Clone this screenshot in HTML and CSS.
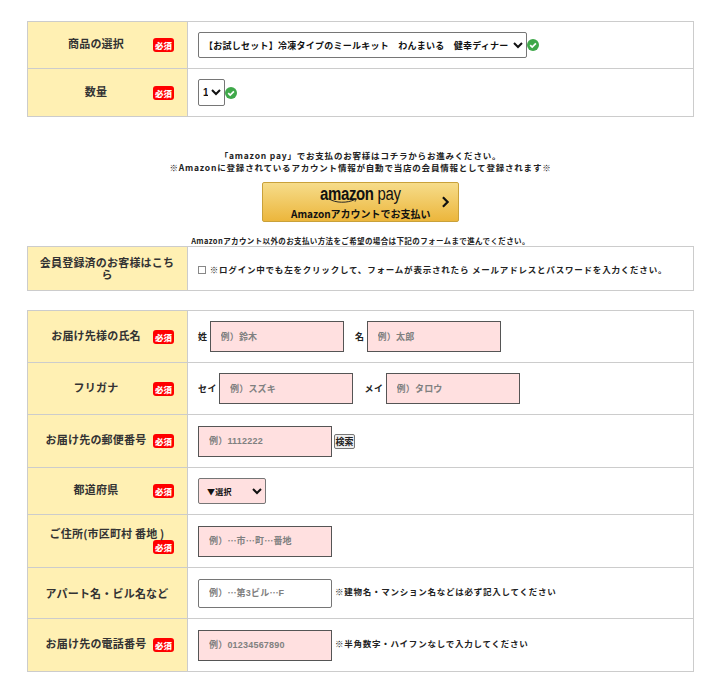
FILE: index.html
```html
<!DOCTYPE html>
<html lang="ja">
<head>
<meta charset="utf-8">
<title>注文フォーム</title>
<link rel="stylesheet" href="styles.css">
</head>
<body>
<main class="page">
  <table class="form-table">
    <tr class="h47">
      <th><span>商品の選択</span><b class="req">必須</b></th>
      <td class="inline">
        <select class="select product"><option>【お試しセット】冷凍タイプのミールキット　わんまいる　健幸ディナー</option></select><svg class="ok" viewBox="0 0 12 12"><circle cx="6" cy="6" r="6" fill="#3fa84a"/><path d="M3.2 6.2 5.2 8.1 8.9 4.3" fill="none" stroke="#fff" stroke-width="1.7"/></svg>
      </td>
    </tr>
    <tr class="h48">
      <th><span>数量</span><b class="req">必須</b></th>
      <td class="inline">
        <select class="select qty"><option>1</option></select><svg class="ok" viewBox="0 0 12 12"><circle cx="6" cy="6" r="6" fill="#3fa84a"/><path d="M3.2 6.2 5.2 8.1 8.9 4.3" fill="none" stroke="#fff" stroke-width="1.7"/></svg>
      </td>
    </tr>
  </table>

  <section class="amazon">
    <p class="note">「amazon pay」でお支払のお客様はコチラからお進みください。</p>
    <p class="note">※Amazonに登録されているアカウント情報が自動で当店の会員情報として登録されます※</p>
    <a class="pay-btn" href="#">
      <span class="pay-logo">amazon<span class="pay-word"> pay</span></span>
      <svg class="smile" viewBox="0 0 40 8"><path d="M1 1C10 7 26 7 36 2" fill="none" stroke="#222" stroke-width="1.3"/><path d="M33 1 38 1 36 5" fill="none" stroke="#222" stroke-width="1"/></svg>
      <span class="pay-sub">Amazonアカウントでお支払い</span>
      <svg class="chev" viewBox="0 0 10 14"><path d="M2 1.5 7.5 7 2 12.5" fill="none" stroke="#111" stroke-width="2.6"/></svg>
    </a>
    <p class="note small">Amazonアカウント以外のお支払い方法をご希望の場合は下記のフォームまで進んでください。</p>
  </section>

  <table class="form-table member">
    <tr class="h44">
      <th>会員登録済のお客様はこちら</th>
      <td class="login"><input type="checkbox" class="check"> ※ログイン中でも左をクリックして、フォームが表示されたら メールアドレスとパスワードを入力ください。</td>
    </tr>
  </table>

  <table class="form-table last">
    <tr class="h52">
      <th><span>お届け先様の氏名</span><b class="req">必須</b></th>
      <td class="inline"><label class="lbl">姓</label><input class="input pink w134" placeholder="例）鈴木"><label class="lbl gap12">名</label><input class="input pink w134" placeholder="例）太郎"></td>
    </tr>
    <tr class="h52">
      <th><span>フリガナ</span><b class="req">必須</b></th>
      <td class="inline"><label class="lbl">セイ</label><input class="input pink w134" placeholder="例）スズキ"><label class="lbl gap12">メイ</label><input class="input pink w134" placeholder="例）タロウ"></td>
    </tr>
    <tr class="h53">
      <th><span>お届け先の郵便番号</span><b class="req">必須</b></th>
      <td class="inline"><input class="input pink w134" placeholder="例）1112222"><button class="search" type="button">検索</button></td>
    </tr>
    <tr class="h47">
      <th><span>都道府県</span><b class="req">必須</b></th>
      <td class="inline"><select class="select pref"><option>▼選択</option></select></td>
    </tr>
    <tr class="h53">
      <th><span>ご住所(市区町村 番地 )</span><b class="req">必須</b></th>
      <td class="inline"><input class="input pink w134" placeholder="例）⋯市⋯町⋯番地"></td>
    </tr>
    <tr class="h51">
      <th>アパート名・ビル名など</th>
      <td class="inline"><input class="input white w134" placeholder="例）⋯第3ビル⋯F"><span class="hint">※建物名・マンション名などは必ず記入してください</span></td>
    </tr>
    <tr class="h53">
      <th><span>お届け先の電話番号</span><b class="req">必須</b></th>
      <td class="inline"><input class="input pink w134" placeholder="例）01234567890"><span class="hint">※半角数字・ハイフンなしで入力してください</span></td>
    </tr>
  </table>
</main>
</body>
</html>
```

FILE: styles.css
```css
* { box-sizing: border-box; }
html, body { margin: 0; background: #fff; }
body {
  font-family: "Noto Sans CJK JP", "Noto Sans", sans-serif;
  color: #222;
}
.page { padding: 21px 23px 0 27px; }
.form-table {
  width: 667px;
  border-collapse: collapse;
  table-layout: fixed;
  margin-bottom: 20px;
}
.member { margin-bottom: 19px; }
.form-table th, .form-table td {
  border: 1px solid #ccc;
  padding: 0;
  font-size: 10px;
  line-height: 12px;
  vertical-align: middle;
}
.form-table th {
  width: 160px;
  background: #fff0b3;
  padding: 0 12px 1px 11px;
  text-align: center;
  font-size: 11px;
  letter-spacing: 0.2px;
  color: #333;
  font-weight: 700;
}
.form-table td { padding: 0 10px; }
.h44 { height: 44px; }
.h47 { height: 47px; }
.h48 { height: 48px; }
.h51 { height: 51px; }
.h52 { height: 52px; }
.h53 { height: 53px; }
.req {
  float: right;
  width: 21px;
  height: 14px;
  margin: 1px 1px 0 0;
  background: #f00;
  border-radius: 3px;
  color: #fff;
  font-size: 8.5px;
  line-height: 14px;
  letter-spacing: 0;
  text-align: center;
  font-weight: 900;
}
.inline { white-space: nowrap; }
.inline > * { vertical-align: middle; }
.select {
  height: 26px;
  border: 1px solid #767676;
  border-radius: 2px;
  background: #fff;
  font: 700 9px/1 "Noto Sans CJK JP", sans-serif;
  letter-spacing: 0.25px;
  color: #111;
  padding: 0 0 0 1px;
}
.product { width: 329px; }
.qty { width: 27px; height: 27px; padding: 0; font-family: "Liberation Sans", sans-serif; font-size: 10px; }
.pref { width: 68px; height: 26px; background: #ffe0e0; padding-left: 4px; font-size: 8px; }
.ok { width: 12px; height: 12px; }
.amazon { text-align: center; margin-top: 32px; }
.note {
  margin: 0;
  font-size: 8.5px;
  line-height: 12px;
  font-weight: 700;
  letter-spacing: 0.8px;
  color: #222;
}
.note.small {
  margin: 14px 0 0;
  letter-spacing: 0.38px;
  font-size: 7.5px;
  line-height: 10px;
}
.pay-btn {
  position: relative;
  display: block;
  width: 197px;
  height: 40px;
  margin: 9px auto 0;
  border: 1px solid #c9a13a;
  border-radius: 2px;
  background: linear-gradient(#f6dc8a, #ecb63c);
  color: #111;
  text-decoration: none;
  overflow: hidden;
}
.pay-logo {
  position: absolute;
  left: 57px;
  top: 0;
  font: 700 18px/22px "Liberation Sans", sans-serif;
  letter-spacing: -0.4px;
  white-space: nowrap;
  transform: scaleX(0.83);
  transform-origin: left center;
}
.pay-word { font-weight: 400; }
.smile { position: absolute; left: 65px; top: 15px; width: 30px; height: 6px; }
.pay-sub {
  position: absolute;
  left: 28px;
  top: 24px;
  font-size: 10px;
  line-height: 13px;
  font-weight: 700;
  white-space: nowrap;
}
.chev { position: absolute; right: 8px; top: 13px; width: 9px; height: 12px; }
.form-table .login { font-size: 8.5px; font-weight: 700; letter-spacing: 0.8px; white-space: nowrap; }
.check {
  appearance: none;
  width: 8px;
  height: 8px;
  margin: 0 1px 0 0;
  border: 1px solid #888;
  background: #fff;
  vertical-align: -1px;
}
.lbl { font-size: 9px; font-weight: 700; letter-spacing: 0.5px; margin-right: 2px; }
.gap12 { margin-left: 11.5px; }
.input {
  height: 31px;
  padding: 0 10px;
  border: 1px solid #555;
  border-radius: 0;
  font: 700 9px/1 "Liberation Sans", "Noto Sans CJK JP", sans-serif;
  letter-spacing: 0.2px;
}
.input::placeholder { color: #808080; opacity: 1; }
.pink { background: #ffe0e0; }
.white { background: #fff; height: 29px; border-radius: 2px; border-color: #767676; }
.w134 { width: 134px; }
.search {
  height: 15px;
  width: 21px;
  margin-left: 2px;
  padding: 0;
  border: 1px solid #767676;
  border-radius: 2px;
  background: #efefef;
  font: 700 9px/1 "Noto Sans CJK JP", sans-serif;
  color: #222;
}
.hint { display: inline-block; padding-bottom: 4px; font-size: 8.5px; font-weight: 700; letter-spacing: 0.75px; margin-left: 3px; }
```
